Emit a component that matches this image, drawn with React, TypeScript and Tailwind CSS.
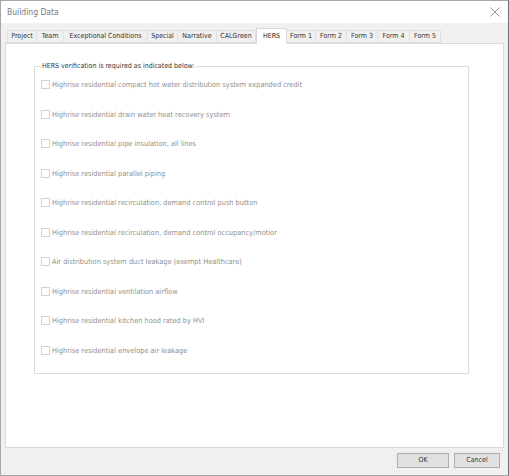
const tabs: Array<{ label: string; w: string }> = [
  { label: "Project", w: "w-[30px]" },
  { label: "Team", w: "w-[27px]" },
  { label: "Exceptional Conditions", w: "w-[84px]" },
  { label: "Special", w: "w-[30px]" },
  { label: "Narrative", w: "w-[39px]" },
  { label: "CALGreen", w: "w-[39px]" },
  { label: "HERS", w: "w-[31px]" },
  { label: "Form 1", w: "w-[29px]" },
  { label: "Form 2", w: "w-[31px]" },
  { label: "Form 3", w: "w-[31px]" },
  { label: "Form 4", w: "w-[32px]" },
  { label: "Form 5", w: "w-[31px]" },
];

const checks = [
  "Highrise residential compact hot water distribution system expanded credit",
  "Highrise residential drain water heat recovery system",
  "Highrise residential pipe insulation, all lines",
  "Highrise residential parallel piping",
  "Highrise residential recirculation, demand control push button",
  "Highrise residential recirculation, demand control occupancy/motior",
  "Air distribution system duct leakage (exempt Healthcare)",
  "Highrise residential ventilation airflow",
  "Highrise residential kitchen hood rated by HVI",
  "Highrise residential envelope air leakage",
];

const font = "font-['DejaVu_Sans_Condensed','DejaVu_Sans',sans-serif]";

export default function App() {
  const active = "HERS";

  return (
    <div
      className={`flex h-[476px] w-[509px] flex-col border border-[#a8a8a8] border-r-[#6e6e6e] bg-[#f0f0f0] ${font}`}
    >
      {/* title bar */}
      <div className="flex h-[22px] shrink-0 items-center justify-between bg-white pl-[6px] pr-[8px]">
        <span className="text-[8.5px] text-[#7a7a7a]">Building Data</span>
        <svg width="10" height="10" viewBox="0 0 10 10" className="text-[#8a8a8a]">
          <path d="M0.5 0.5 L9.5 9.5 M9.5 0.5 L0.5 9.5" stroke="currentColor" strokeWidth="0.9" fill="none" />
        </svg>
      </div>

      {/* tab strip */}
      <div className="flex h-[20px] shrink-0 items-end pl-[6px]">
        {tabs.map((t) =>
          t.label === active ? (
            <div
              key={t.label}
              className={`relative -mb-px z-10 flex h-[16px] items-center justify-center border border-b-0 border-[#d9d9d9] bg-white text-[7px] text-[#222] ${t.w}`}
            >
              {t.label}
            </div>
          ) : (
            <div
              key={t.label}
              className={`flex h-[13px] items-center justify-center border-y border-r border-[#e0e0e0] bg-[#f0f0f0] text-[7px] text-[#333] first:border-l ${t.w}`}
            >
              {t.label}
            </div>
          ),
        )}
      </div>

      {/* page body */}
      <div className="mx-[4px] h-[405px] shrink-0 border border-[#dadada] bg-white pl-[28px] pr-[34px] pt-[17px]">
        <fieldset className="h-[313px] border border-[#dcdcdc] pl-[6px]">
          <legend className="px-px text-[7px] text-[#333]">HERS verification is required as indicated below:</legend>
          <div className="mt-[8px] flex flex-col gap-[19.56px]">
            {checks.map((c) => (
              <div key={c} className="flex h-[10px] items-center">
                <div className="h-[9px] w-[9px] shrink-0 border border-[#d4d4d4] bg-white" />
                <span className="ml-[2px] whitespace-nowrap text-[7.35px] text-[#909090]">{c}</span>
              </div>
            ))}
          </div>
        </fieldset>
      </div>

      {/* footer buttons */}
      <div className="flex flex-1 items-start justify-end gap-[5px] pr-[8px] pt-[5px]">
        <button className="h-[15px] w-[52px] border border-[#adadad] bg-[#e1e1e1] text-[7px] text-[#333]">OK</button>
        <button className="h-[15px] w-[46px] border border-[#adadad] bg-[#e1e1e1] text-[7px] text-[#333]">Cancel</button>
      </div>
    </div>
  );
}
